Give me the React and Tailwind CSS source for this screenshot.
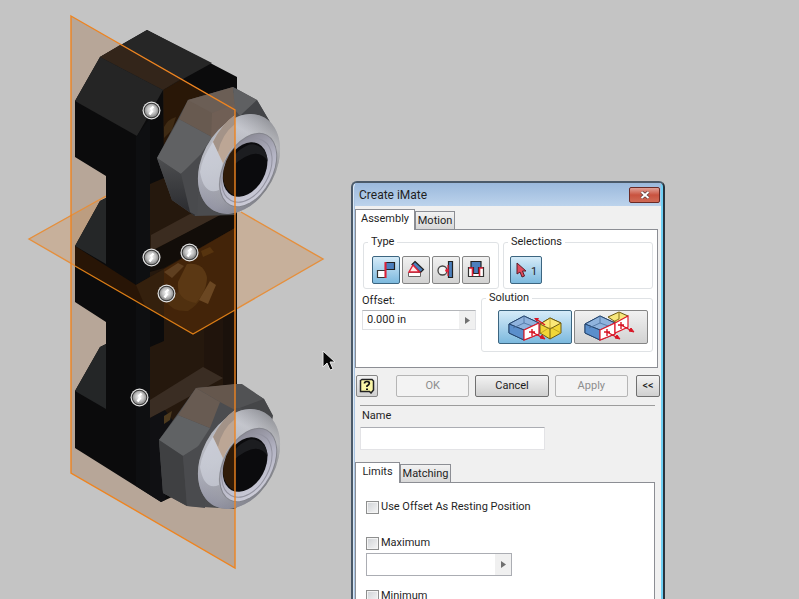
import React from 'react';
import clsx from 'clsx';

const MARKERS = [
  [151, 110],
  [151, 257],
  [189, 252],
  [166, 293],
  [139, 397],
];

const NutRing = ({ cy }) => (
  <g transform={`translate(0 ${cy - 164})`}>
    <g transform="translate(239 164) rotate(28)">
      <ellipse rx="37" ry="53" fill="url(#ring)" />
      <ellipse rx="37" ry="53" fill="url(#sheen)" />
    </g>
    {/* part of the ring behind the work plane */}
    <path d="M213 142Q222 124 235 115V145L230 151Q226 156 223 164Z" fill="#bca695" />
    <path d="M235 115V124Q222 134 218 152L213 142Q222 124 235 115Z" fill="#a39388" />
    <path d="M213 142L223 163Q218 178 219 190Q204 196 200 172Q202 158 213 142Z" fill="#d7dae6" opacity=".55" />
    <g transform="translate(239 164) rotate(28)">
      <ellipse cx="11" cy="1" rx="25" ry="40" fill="#83848c" />
      <ellipse cx="11" cy="1" rx="24" ry="39" fill="url(#rim)" />
      <ellipse cx="10" cy="2" rx="22" ry="34" fill="none" stroke="#9393a0" />
      <ellipse cx="8" cy="2" rx="20" ry="29" fill="#0b0b0d" />
      <path d="M0 -22A20 29 0 0 1 24 -16Q14 -22 6 -14T-8 14Q-12 -8 0 -22Z" fill="#1c1d20" />
    </g>
    <path d="M235 147Q223 160 223 178Q224 190 235 196Z" fill="#301b08" />
  </g>
);

const Scene = () => (
  <svg className="absolute left-0 top-0" width="340" height="599" viewBox="0 0 340 599" role="img" aria-label="Model view">
    <defs>
      <linearGradient id="ring" x1="0" y1=".2" x2="1" y2=".6">
        <stop offset="0" stopColor="#8e9097" />
        <stop offset=".12" stopColor="#b9bbc4" />
        <stop offset=".35" stopColor="#b4b6be" />
        <stop offset=".7" stopColor="#a3a4a8" />
        <stop offset=".9" stopColor="#85868a" />
        <stop offset="1" stopColor="#77787e" />
      </linearGradient>
      <linearGradient id="sheen" x1="0" y1="0" x2="0" y2="1">
        <stop offset="0" stopColor="#707175" stopOpacity=".45" />
        <stop offset=".2" stopColor="#dedfe3" stopOpacity=".35" />
        <stop offset=".6" stopColor="#a9abb3" stopOpacity=".1" />
        <stop offset="1" stopColor="#8889a0" stopOpacity=".6" />
      </linearGradient>
      <linearGradient id="rim" x1="0" y1="0" x2="1" y2="1">
        <stop offset="0" stopColor="#7d7c86" />
        <stop offset=".5" stopColor="#b4b4c4" />
        <stop offset="1" stopColor="#d4d4df" />
      </linearGradient>
      <linearGradient id="lower" x1="0" y1="0" x2="0" y2="1">
        <stop offset="0" stopColor="#4d4e50" />
        <stop offset="1" stopColor="#292a2e" />
      </linearGradient>
      <radialGradient id="ball" cx=".5" cy=".45" r=".6">
        <stop offset="0" stopColor="#fafafa" />
        <stop offset=".5" stopColor="#c4c4c4" />
        <stop offset="1" stopColor="#777777" />
      </radialGradient>
    </defs>

    {/* work planes */}
    <polygon points="71,16 235,110 235,568 71,473" fill="#b7a698" />
    <polygon points="29,239 153,169 241,212 323,259 193,334" fill="#c7b09b" />
    <polygon points="71,215 106,196 106,284 71,263" fill="#bc9d80" />
    <path d="M106 196L29 239L193 334L323 259L241 212" fill="none" stroke="#e58f3c" strokeWidth="1.4" />

    {/* body */}
    <polygon
      points="147,30 237,77 237,490 172,497 161,502 75,448 75,391 100,347 106,344 106,322 75,302 75,246 100,201 106,198 106,176 75,157 75,101 100,57"
      fill="#0b0b0c"
    />
    <polygon points="147,30 212,63 163,90 100,57" fill="#262626" />
    <polygon points="120,45 181,79 163,90 100,57" fill="#33251a" />
    <polygon points="100,57 163,90 137,136 75,101" fill="#252525" />
    <polygon points="100,201 106,198 106,264 75,246" fill="#252728" />
    <polygon points="100,347 106,344 106,409 75,391" fill="#242627" />
    <polygon points="136,137 150,118 150,495 136,486" fill="#0e0f11" />
    <polygon points="163,90 181,79 235,110 235,490 172,497 150,450 150,184 164,178" fill="#25180d" />
    <polygon points="164,90 181,80 200,91 186,180 164,178" fill="#291707" />
    <polygon points="151,235 190,214 222,215 151,251" fill="#3b2c20" />
    <polygon points="150,252 222,214 235,210 235,228 164,268 150,272" fill="#120d09" />
    <polygon points="75,246 136,285 235,228 235,310 193,334 75,266" fill="#281506" />
    <polygon points="164,269 235,228 235,310 193,334 164,317" fill="#432409" />
    <polygon points="136,285 164,269 164,317 145,306" fill="#34200d" />
    <polygon points="150,310 164,318 164,341 150,347" fill="#0b0b0c" />
    <polygon points="204,328 223,317 223,378 204,367" fill="#20140c" />
    <polygon points="223,317 235,310 235,400 223,395" fill="#1a110b" />

    {/* centre boss */}
    <g fill="#57340f">
      <polygon points="201,251 210,247 214,252 203,257" />
      <polygon points="164,272 178,263 184,266 172,278" fill="#5f3f20" />
      <path d="M187 264Q204 262 207 278Q206 300 188 311Q172 312 166 301Q178 298 181 284Z" fill="#50300f" />
      <path d="M187 264Q204 262 207 278Q206 292 196 303Q176 300 178 282Z" fill="#5b3814" />
      <polygon points="210,281 216,285 208,304 199,300" fill="#6b4722" />
    </g>

    {/* lower shelf */}
    <polygon points="150,400 203,367 223,378 165,410 150,418" fill="#3a2d23" />
    <polygon points="150,418 165,410 180,430 165,500 161,502 150,495" fill="#101013" />
    <path d="M164 127Q168 119 176 117L172 130L164 138Z" fill="#3f2b14" />
    <path d="M164 416L172 411L170 420L164 424Z" fill="#4d3a1e" />

    {/* top nut */}
    <polygon points="157,158 188,100 233,87 257,100 270,122 260,180 235,215 195,216 172,200" fill="#4b4c4f" />
    <polygon points="157,158 179,119 212,137 197,160 181,174" fill="#606163" />
    <polygon points="179,119 188,100 211,107 235,92 235,118 212,137" fill="#685a50" />
    <polygon points="188,100 233,87 235,110 212,113" fill="#6b5e55" />
    <polygon points="212,113 235,104 235,120 211,138" fill="#705f55" />
    <polygon points="233,87 257,100 240,116 235,110" fill="#5f6062" />
    <polygon points="257,100 270,122 240,116" fill="#434447" />
    <polygon points="157,158 181,174 197,160 195,216 172,200" fill="url(#lower)" />
    <polygon points="181,174 200,155 197,216 190,212" fill="#494a4d" />
    <NutRing cy={164} />

    {/* bottom nut */}
    <polygon points="159,440 196,388 240,384 264,399 273,416 260,480 235,509 187,506 163,493" fill="#4b4c4f" />
    <polygon points="159,440 178,415 210,428 197,448 183,456" fill="#606264" />
    <polygon points="178,415 196,388 220,402 210,428" fill="#685b52" />
    <polygon points="196,388 235,384 235,410 220,402" fill="#65574d" />
    <polygon points="235,384 242,384 264,399 240,408 235,408" fill="#515254" />
    <polygon points="264,399 273,416 240,408" fill="#454648" />
    <polygon points="159,440 183,456 187,506 163,493" fill="#3f4042" />
    <polygon points="183,456 200,445 205,508 187,506" fill="#4a4b4e" />
    <NutRing cy={459} />

    <path d="M75 266L193 334L235 310" fill="none" stroke="#db7d16" strokeWidth="1.4" />
    <polygon points="71,16 235,110 235,568 71,473" fill="none" stroke="#ee8420" strokeWidth="1.4" />

    {MARKERS.map(([x, y]) => (
      <g key={`${x}-${y}`} transform={`translate(${x + 0.5} ${y + 0.5})`}>
        <circle r="9" fill="#e4e4e4" />
        <circle r="7.8" fill="#3a3a3a" />
        <circle r="6.8" fill="url(#ball)" />
        <path d="M2 -4L-1 -1M1 0L-2 4" fill="none" stroke="#fff" strokeWidth="2.4" />
      </g>
    ))}

    <path d="M323 351V367L327 363L330 370L333 369L330 362H335Z" fill="#050505" stroke="#e8e8e8" strokeWidth="1" />
  </svg>
);

const MateIcon = () => (
  <svg width="20" height="20" viewBox="0 0 20 20" aria-hidden="true">
    <path d="M1.5 10.5H9.5V17.5H1.5Z" fill="#fff" stroke="#333" strokeWidth="1.2" />
    <path d="M9.5 2.5H18.5V9.5H9.5Z" fill="#4b7fbd" stroke="#222" strokeWidth="1.2" />
    <path d="M9.5 2V18" stroke="#e02038" strokeWidth="2" />
  </svg>
);

const AngleIcon = () => (
  <svg width="20" height="20" viewBox="0 0 20 20" aria-hidden="true">
    <path d="M2.5 12.5H14.5V16.5H2.5Z" fill="#fff" stroke="#666" />
    <path d="M9 1.5L17.5 9.5L14.5 12.5L6 4.500Z" fill="#4b7fbd" stroke="#222" strokeWidth="1.2" />
    <path d="M7 5L3 12H13.500Z" fill="#fde9e9" stroke="#e02038" strokeWidth="1.4" />
  </svg>
);

const TangentIcon = () => (
  <svg width="20" height="20" viewBox="0 0 20 20" aria-hidden="true">
    <circle cx="6.500" cy="10.500" r="4.500" fill="#f3f3f3" stroke="#444" strokeWidth="1.3" />
    <path d="M12.5 1.5H16.5V17.5H12.5Z" fill="#4b7fbd" stroke="#222" strokeWidth="1.2" />
    <path d="M12 5V16" stroke="#e02038" strokeWidth="1.2" />
    <circle cx="11" cy="10.500" r="1.8" fill="#e02038" />
  </svg>
);

const InsertIcon = () => (
  <svg width="20" height="20" viewBox="0 0 20 20" aria-hidden="true">
    <path d="M2.5 7.500H17.500V16.500H2.500Z" fill="#fff" stroke="#333" strokeWidth="1.2" />
    <path d="M5 1.5H15V7.5H12.5V13.5H7.5V7.5H5Z" fill="#4b7fbd" stroke="#222" strokeWidth="1.2" />
    <path d="M3 8H6.500V16M17 8H13.500V16" fill="none" stroke="#e02038" strokeWidth="1.6" />
  </svg>
);

const BlueBox = () => (
  <>
    <path d="M2 13L17 5L32 12V23L17 29L2 22Z" fill="#6f9ed4" stroke="#26466e" />
    <path d="M2 13L17 5L32 12L17 19Z" fill="#8fb3dd" stroke="#26466e" />
    <path d="M2 13L17 19V29L2 22Z" fill="#5b8fcc" stroke="#26466e" />
    <path d="M17 5V12L6 17M17 12L28 16" fill="none" stroke="#4a6e9c" strokeWidth=".8" />
    <path d="M17 19L32 12V23L17 29Z" fill="#fff" stroke="#e01c2c" strokeWidth="1.2" />
  </>
);

const Arrow = ({ x, y }) => (
  <g transform={`translate(${x} ${y})`} stroke="#d81424" fill="#d81424">
    <path d="M-3 -1H3M0 -4V3M0 -1L11 5" strokeWidth="1.4" />
    <path d="M8 5L13 6L10 2Z" />
  </g>
);

const OpposedIcon = () => (
  <svg width="56" height="32" viewBox="0 0 56 32" aria-hidden="true">
    <path d="M33 13L43 7L54 12V22L43 28L33 22Z" fill="#f1d637" stroke="#6d5a14" />
    <path d="M33 13L43 7L54 12L43 18Z" fill="#fbe878" stroke="#6d5a14" />
    <path d="M43 7V16L34 22M43 16L54 22" fill="none" stroke="#b89a20" strokeWidth=".8" />
    <path d="M43 18V28" stroke="#6d5a14" />
    <BlueBox />
    <path d="M38 14L29 8" stroke="#d81424" strokeWidth="1.5" />
    <path d="M27 7L32 7L30 11Z" fill="#d81424" />
    <Arrow x={25} y={22} />
  </svg>
);

const AlignedIcon = () => (
  <svg width="56" height="32" viewBox="0 0 56 32" aria-hidden="true">
    <path d="M25 6L36 1L45 5L34 12Z" fill="#f7e77c" stroke="#6d5a14" />
    <path d="M36 1V8L30 11" fill="none" stroke="#8a741c" />
    <BlueBox />
    <path d="M32 12L45 5V16L32 22Z" fill="#fff" stroke="#e01c2c" strokeWidth="1.2" />
    <Arrow x={24} y={22} />
    <Arrow x={38} y={15} />
  </svg>
);

const HelpIcon = () => (
  <svg width="16" height="16" viewBox="0 0 16 16" aria-hidden="true">
    <path d="M1.5 2.5L3 1.5H13L14.5 3V12L12 15L10.5 13.5H1.5Z" fill="#fbf7a8" stroke="#222" strokeWidth="1.5" />
    <path d="M5.5 5.5Q5.5 3.5 8 3.5Q10.5 3.5 10.3 5.5Q10 6.8 8 8V9" fill="none" stroke="#111" strokeWidth="1.7" />
    <path d="M7 10.5H9V12H7Z" fill="#111" />
  </svg>
);

const ToolButton = ({ label, active, className, children }) => (
  <button
    type="button"
    aria-label={label}
    aria-pressed={!!active}
    className={clsx(
      'flex items-center justify-center rounded-[2px] border',
      active
        ? 'border-[#3c6580] bg-linear-to-b from-[#d5ebf8] to-[#7cb9de]'
        : 'border-[#858585] bg-linear-to-b from-[#f1f1f1] to-[#d2d2d2]',
      className
    )}
  >
    {children}
  </button>
);

const PushButton = ({ children, disabled, className }) => (
  <button
    type="button"
    disabled={disabled}
    className={clsx(
      'h-[22px] rounded-[2px] border',
      disabled
        ? 'border-[#b5b5b5] bg-[#f3f3f3] text-[#8d8d8d]'
        : 'border-[#6f6f6f] bg-linear-to-b from-[#f3f3f3] to-[#d0d0d0] text-[#1c1c1c]',
      className
    )}
  >
    {children}
  </button>
);

const Tab = ({ active, children, className }) => (
  <button
    type="button"
    role="tab"
    aria-selected={!!active}
    className={clsx(
      'border border-b-0 border-[#8c8e94] text-center',
      active ? 'relative -mb-px h-[21px] bg-white pb-[2px]' : 'h-[18px] bg-linear-to-b from-[#f2f2f2] to-[#d8d8d8]',
      className
    )}
  >
    {children}
  </button>
);

const Group = ({ title, className, bodyClass, children }) => (
  <fieldset className={clsx('rounded-[3px] border border-[#dfe2e5]', className)}>
    <legend className="ml-1 px-[3px] leading-3">{title}</legend>
    <div className={clsx('flex gap-[2px]', bodyClass)}>{children}</div>
  </fieldset>
);

const Flyout = ({ label }) => (
  <button type="button" aria-label={label} className="flex w-4 items-center justify-center bg-[#f0f0f0]">
    <svg width="5" height="7" viewBox="0 0 5 7" aria-hidden="true">
      <path d="M0 0L5 3.500L0 7Z" fill="#707070" />
    </svg>
  </button>
);

const Check = ({ children }) => (
  <label className="flex h-4 items-center gap-[2px]">
    <input
      type="checkbox"
      className="size-[13px] appearance-none border border-[#8e8f8f] bg-linear-to-br from-[#cfd2d6] to-[#f6f6f6] shadow-[inset_0_0_0_1px_#f4f4f4]"
    />
    {children}
  </label>
);

const CreateIMate = () => (
  <section
    role="dialog"
    aria-labelledby="dialog-title"
    className="absolute left-[351px] top-[181px] w-[314px] rounded-t-md border-2 border-[#4b5a69] border-r-[#29333d] bg-[#a9c4e2] px-[2px] shadow-[inset_-2px_0_0_#6fd0f5,inset_1px_1px_0_#dbe8f5]"
  >
    <header className="flex h-[23px] items-center justify-between bg-linear-to-b from-[#9bb9dc] to-[#bcd3ec] pl-1 pr-px">
      <h1 id="dialog-title" className="text-[12px]">Create iMate</h1>
      <button
        type="button"
        aria-label="Close"
        className="flex h-4 w-[31px] items-center justify-center rounded-[2px] border border-[#6b2a25] bg-linear-to-b from-[#e0a097] via-[#c9523f] to-[#cf6a56]"
      >
        <svg width="10" height="8" viewBox="0 0 10 8" aria-hidden="true">
          <path d="M1.5 1L8.5 7M8.5 1L1.5 7" stroke="#5c3b3b" strokeWidth="3.4" />
          <path d="M1.5 1L8.5 7M8.5 1L1.5 7" stroke="#fff" strokeWidth="2" />
        </svg>
      </button>
    </header>

    <div className="bg-[#f0f0f0] pt-[3px]">
      <div role="tablist" className="flex items-end">
        <Tab active className="w-[60px]">Assembly</Tab>
        <Tab className="w-10">Motion</Tab>
      </div>
      <div className="mr-[3px] h-[139px] border border-[#8c8e94] bg-white px-1 pt-[6px]">
        <div className="flex gap-1 pl-[3px]">
          <Group title="Type" className="h-[53px] w-[136px]" bodyClass="pl-2 pt-2">
            <ToolButton label="Mate" active className="size-7"><MateIcon /></ToolButton>
            <ToolButton label="Angle" className="size-7"><AngleIcon /></ToolButton>
            <ToolButton label="Tangent" className="size-7"><TangentIcon /></ToolButton>
            <ToolButton label="Insert" className="size-7"><InsertIcon /></ToolButton>
          </Group>
          <Group title="Selections" className="h-[53px] w-[150px]" bodyClass="pl-[6px] pt-2">
            <ToolButton label="First selection" active className="h-7 w-8 gap-1">
              <svg width="12" height="16" viewBox="0 0 12 16" aria-hidden="true">
                <path d="M2 1V12L5 10L7 15L9.5 14L7.5 9H11Z" fill="#df4a5c" stroke="#5a1c28" />
              </svg>
              <span className="mt-1">1</span>
            </ToolButton>
          </Group>
        </div>
        <div className="flex gap-[5px] pl-[2px] pt-[3px]">
          <div className="w-[114px] pt-[3px]">
            <label htmlFor="offset" className="block leading-3">Offset:</label>
            <div className="mt-[3px] flex h-5 border border-[#e0e1e4] border-t-[#b4b6ba]">
              <input id="offset" defaultValue="0.000 in" className="min-w-0 flex-1 pl-1 outline-none" />
              <Flyout label="Offset options" />
            </div>
          </div>
          <Group title="Solution" className="h-[60px] w-[173px]" bodyClass="pl-4 pt-[6px]">
            <ToolButton label="Opposed" active className="h-[34px] w-[74px] shrink-0"><OpposedIcon /></ToolButton>
            <ToolButton label="Aligned" className="h-[34px] w-[74px] shrink-0"><AlignedIcon /></ToolButton>
          </Group>
        </div>
      </div>

      <div className="flex items-center pl-px pt-[7px]">
        <button
          type="button"
          aria-label="Help"
          className="flex size-[22px] items-center justify-center rounded-[2px] border border-[#858585] bg-linear-to-b from-[#f3f3f3] to-[#d0d0d0]"
        >
          <HelpIcon />
        </button>
        <div className="ml-[18px] mr-2 flex flex-1 gap-[6px]">
          <PushButton disabled className="flex-1">OK</PushButton>
          <PushButton className="flex-1">Cancel</PushButton>
          <PushButton disabled className="flex-1">Apply</PushButton>
        </div>
        <PushButton className="mr-px w-6">&lt;&lt;</PushButton>
      </div>

      <div className="ml-[5px] mr-[6px] mt-2 border-t border-[#9c9c9c] pt-1">
        <label htmlFor="name" className="block px-[2px] leading-3">Name</label>
        <input
          id="name"
          className="mt-[5px] block h-[23px] w-[185px] border border-[#e3e3e6] border-t-[#abadb3] bg-white px-1 outline-none"
        />
      </div>

      <div role="tablist" className="mt-3 flex items-end">
        <Tab active className="w-[45px]">Limits</Tab>
        <Tab className="w-[51px]">Matching</Tab>
      </div>
      <div className="mr-[6px] border border-[#8c8e94] bg-white px-[10px] py-4">
        <Check>Use Offset As Resting Position</Check>
        <div className="mt-5">
          <Check>Maximum</Check>
          <div className="mt-[2px] flex h-[23px] w-[146px] border border-[#abadb3]">
            <input aria-label="Maximum value" className="min-w-0 flex-1 px-1 outline-none" />
            <Flyout label="Maximum options" />
          </div>
        </div>
        <div className="mt-3">
          <Check>Minimum</Check>
          <div className="mt-[2px] flex h-[23px] w-[146px] border border-[#abadb3]">
            <input aria-label="Minimum value" className="min-w-0 flex-1 px-1 outline-none" />
            <Flyout label="Minimum options" />
          </div>
        </div>
      </div>
    </div>
  </section>
);

export default function App() {
  return (
    <main className="relative h-screen overflow-hidden bg-[#c4c4c4] font-[Roboto,sans-serif] text-[11px] leading-4 text-[#1f1f1f]">
      <Scene />
      <CreateIMate />
    </main>
  );
}
